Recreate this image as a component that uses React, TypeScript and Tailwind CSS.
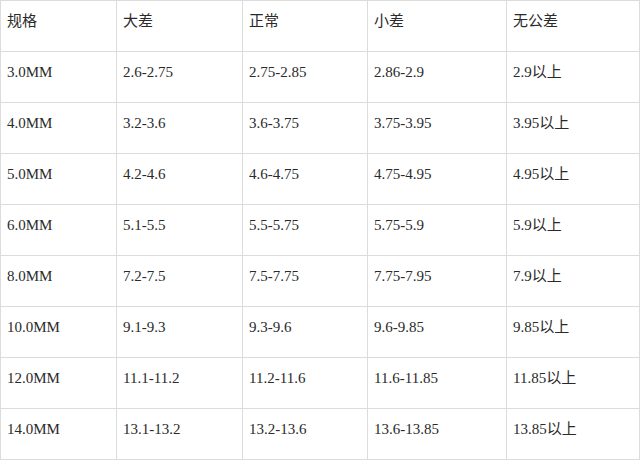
const header = ["规格", "大差", "正常", "小差", "无公差"];

const rows = [
  ["3.0MM", "2.6-2.75", "2.75-2.85", "2.86-2.9", "2.9以上"],
  ["4.0MM", "3.2-3.6", "3.6-3.75", "3.75-3.95", "3.95以上"],
  ["5.0MM", "4.2-4.6", "4.6-4.75", "4.75-4.95", "4.95以上"],
  ["6.0MM", "5.1-5.5", "5.5-5.75", "5.75-5.9", "5.9以上"],
  ["8.0MM", "7.2-7.5", "7.5-7.75", "7.75-7.95", "7.9以上"],
  ["10.0MM", "9.1-9.3", "9.3-9.6", "9.6-9.85", "9.85以上"],
  ["12.0MM", "11.1-11.2", "11.2-11.6", "11.6-11.85", "11.85以上"],
  ["14.0MM", "13.1-13.2", "13.2-13.6", "13.6-13.85", "13.85以上"],
];

export default function App() {
  return (
    <div className="w-[640px] h-[460px] bg-white">
      <div className="grid grid-cols-[115px_125px_124px_138px_132px] auto-rows-[50px] gap-px p-px bg-[#dcdcdc] w-[640px] font-['Liberation_Serif','Noto_Sans_CJK_SC',serif] text-[15px] text-[#2a2a2a]">
        {[header, ...rows].map((row, r) =>
          row.map((cell, c) => (
            <div key={`${r}-${c}`} className="bg-white pl-[6px] pt-[9px] leading-[22px]">
              {cell}
            </div>
          ))
        )}
      </div>
    </div>
  );
}
